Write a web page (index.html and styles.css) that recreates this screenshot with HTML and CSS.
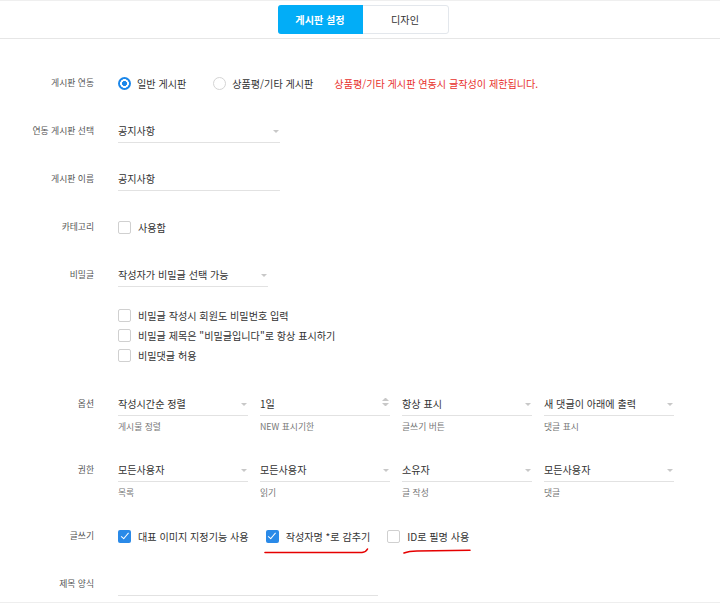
FILE: index.html
```html
<!DOCTYPE html>
<html lang="ko">
<head>
  <meta charset="UTF-8">
  <title>게시판 설정</title>
  <link rel="stylesheet" href="styles.css">
</head>
<body>
  <!-- 상단 탭 -->
  <div class="header">
    <div class="tabs">
      <div class="tab active">게시판 설정</div>
      <div class="tab">디자인</div>
    </div>
  </div>

  <div class="form">
    <div class="row">
      <div class="label">게시판 연동</div>
      <div class="field-line radios">
        <span class="choice"><span class="radio checked"></span>일반 게시판</span>
        <span class="choice"><span class="radio"></span>상품평/기타 게시판</span>
        <span class="warn">상품평/기타 게시판 연동시 글작성이 제한됩니다.</span>
      </div>
    </div>

    <div class="row">
      <div class="label">연동 게시판 선택</div>
      <div class="select w162">공지사항<span class="arrow"></span></div>
    </div>

    <div class="row">
      <div class="label">게시판 이름</div>
      <div class="input w162">공지사항</div>
    </div>

    <div class="row">
      <div class="label">카테고리</div>
      <div class="field-line">
        <span class="choice"><span class="check"></span>사용함</span>
      </div>
    </div>

    <div class="row row-tight">
      <div class="label">비밀글</div>
      <div class="select w150">작성자가 비밀글 선택 가능<span class="arrow"></span></div>
    </div>

    <div class="row row-checks">
      <div class="label"></div>
      <div class="check-list">
        <span class="choice"><span class="check"></span>비밀글 작성시 회원도 비밀번호 입력</span>
        <span class="choice"><span class="check"></span>비밀글 제목은 "비밀글입니다"로 항상 표시하기</span>
        <span class="choice"><span class="check"></span>비밀댓글 허용</span>
      </div>
    </div>

    <div class="row">
      <div class="label">옵션</div>
      <div class="cols">
        <div class="col">
          <div class="select">작성시간순 정렬<span class="arrow"></span></div>
          <div class="help">게시물 정렬</div>
        </div>
        <div class="col">
          <div class="select">1일<span class="spin"><i class="up"></i><i class="down"></i></span></div>
          <div class="help">NEW 표시기한</div>
        </div>
        <div class="col">
          <div class="select">항상 표시<span class="arrow"></span></div>
          <div class="help">글쓰기 버튼</div>
        </div>
        <div class="col">
          <div class="select">새 댓글이 아래에 출력<span class="arrow"></span></div>
          <div class="help">댓글 표시</div>
        </div>
      </div>
    </div>

    <div class="row">
      <div class="label">권한</div>
      <div class="cols">
        <div class="col">
          <div class="select">모든사용자<span class="arrow"></span></div>
          <div class="help">목록</div>
        </div>
        <div class="col">
          <div class="select">모든사용자<span class="arrow"></span></div>
          <div class="help">읽기</div>
        </div>
        <div class="col">
          <div class="select">소유자<span class="arrow"></span></div>
          <div class="help">글 작성</div>
        </div>
        <div class="col">
          <div class="select">모든사용자<span class="arrow"></span></div>
          <div class="help">댓글</div>
        </div>
      </div>
    </div>

    <div class="row">
      <div class="label">글쓰기</div>
      <div class="field-line writes">
        <span class="choice"><span class="check checked"></span>대표 이미지 지정기능 사용</span>
        <span class="choice marked"><span class="check checked"></span>작성자명 *로 감추기
          <svg class="mark mark-a" width="106" height="8" viewBox="0 0 106 8"><path d="M1 5.5 L98 5.5 Q102 5.2 103.5 2" fill="none" stroke="#e60000" stroke-width="1.6" stroke-linecap="round"/></svg>
        </span>
        <span class="choice marked"><span class="check"></span>ID로 필명 사용
          <svg class="mark mark-b" width="70" height="8" viewBox="0 0 70 8"><path d="M1 6 Q6 4.2 14 4 L67 3.2" fill="none" stroke="#e60000" stroke-width="1.6" stroke-linecap="round"/></svg>
        </span>
      </div>
    </div>

    <div class="row last">
      <div class="label">제목 양식</div>
      <div class="input w260"></div>
    </div>
  </div>
</body>
</html>
```

FILE: styles.css
```css
/* Styles généraux */
body {
  margin: 0;
  background-color: #fff;
  font-family: "Noto Sans CJK KR", "Noto Sans", sans-serif;
  font-size: 10.1px;
  color: #333;
}

/* En-tête avec onglets */
.header {
  height: 37px;
  border-top: 1px solid #efefef;
  border-bottom: 1px solid #e6e6e6;
  display: flex;
  justify-content: center;
  align-items: center;
}
.tabs {
  display: flex;
  margin-left: 6px;
  border: 1px solid #e3e7ec;
  border-radius: 3px;
}
.tab {
  width: 85px;
  height: 27px;
  line-height: 27px;
  text-align: center;
  color: #333;
}
.tab.active {
  margin: -1px 0 -1px -1px;
  height: 29px;
  line-height: 29px;
  background-color: #02adf7;
  color: #fff;
  font-weight: bold;
  border-radius: 3px 0 0 3px;
}

/* Formulaire */
.form {
  padding: 32px 0 6px;
  border-bottom: 1px solid #eee;
}
.row {
  display: flex;
  align-items: flex-start;
  margin-bottom: 24px;
}
.row.row-tight {
  margin-bottom: 18px;
}
.row.row-checks {
  margin-bottom: 27px;
}
.row.last {
  margin-bottom: 0;
}
.label {
  width: 94px;
  margin-right: 24px;
  flex-shrink: 0;
  text-align: right;
  line-height: 24px;
  font-size: 8.8px;
  color: #555;
}
.field-line {
  display: flex;
  align-items: center;
  height: 24px;
}
.choice {
  display: inline-flex;
  align-items: center;
  margin-right: 19px;
  white-space: nowrap;
}
.radios .choice:first-child {
  margin-right: 27px;
}
.radios .choice:nth-child(2) {
  margin-right: 21px;
}
.writes .choice {
  margin-right: 17px;
}
.warn {
  color: #e8322d;
}

/* Boutons radio et cases */
.radio {
  width: 13px;
  height: 13px;
  box-sizing: border-box;
  border: 1px solid #d4d4d4;
  border-radius: 50%;
  margin-right: 6px;
}
.radio.checked {
  border: none;
  background: radial-gradient(circle, #1b87ea 0 2.2px, #fff 2.7px 4.1px, #1b87ea 4.6px);
}
.check {
  width: 13px;
  height: 13px;
  box-sizing: border-box;
  border: 1px solid #d0d0d0;
  border-radius: 2px;
  margin-right: 7px;
  position: relative;
}
.check.checked {
  border: none;
  background-color: #2a8ae8;
}
.check.checked::after {
  content: "";
  position: absolute;
  left: 4.5px;
  top: 1.5px;
  width: 3px;
  height: 6.5px;
  border: solid #fff;
  border-width: 0 1.6px 1.6px 0;
  transform: rotate(40deg);
}
.check-list {
  display: flex;
  flex-direction: column;
}
.check-list .choice {
  height: 20px;
}

/* Champs soulignés */
.select,
.input {
  height: 24px;
  line-height: 24px;
  box-sizing: border-box;
  border-bottom: 1px solid #e2e2e2;
  position: relative;
}
.w162 { width: 162px; }
.w150 { width: 150px; }
.w260 { width: 260px; }
.arrow {
  position: absolute;
  right: 1px;
  top: 11px;
  border-left: 3.5px solid transparent;
  border-right: 3.5px solid transparent;
  border-top: 3.5px solid #c8c8c8;
}
.spin {
  position: absolute;
  right: 1px;
  top: 6px;
  width: 7px;
}
.spin i {
  display: block;
  border-left: 3.5px solid transparent;
  border-right: 3.5px solid transparent;
}
.spin .up {
  border-bottom: 3.5px solid #c8c8c8;
  margin-bottom: 2px;
}
.spin .down {
  border-top: 3.5px solid #c8c8c8;
}

/* Colonnes d'options */
.cols {
  display: flex;
  gap: 12px;
}
.col {
  width: 130px;
}
.help {
  margin-top: 4px;
  line-height: 14px;
  font-size: 8.8px;
  color: #777;
}

/* Soulignés rouges à la main */
.marked {
  position: relative;
}
.mark {
  position: absolute;
  top: 18px;
}
.mark-a { left: -2px; }
.mark-b { left: 16px; }
```
